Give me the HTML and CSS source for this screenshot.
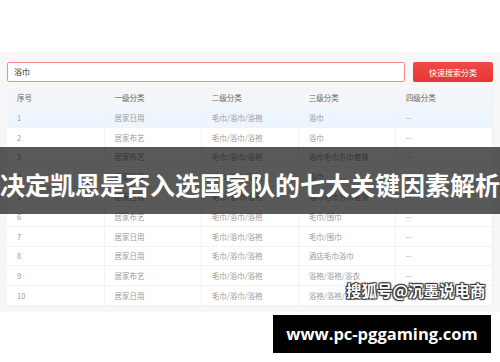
FILE: index.html
```html
<!DOCTYPE html>
<html>

<head>
  <title>分类搜索</title>
  <link rel="stylesheet" href="styles.css">
</head>

<body>
  <div class="page">
    <div class="panel">
      <div class="search-bar">
        <div class="search-input">浴巾</div>
        <button class="search-btn">快速搜索分类</button>
      </div>

      <table class="cat-table">
        <thead>
          <tr>
            <th>序号</th>
            <th>一级分类</th>
            <th>二级分类</th>
            <th>三级分类</th>
            <th>四级分类</th>
          </tr>
        </thead>
        <tbody>
          <tr class="hover"><td>1</td><td>居家日用</td><td>毛巾/浴巾/浴袍</td><td>浴巾</td><td>--</td></tr>
          <tr><td>2</td><td>居家布艺</td><td>毛巾/浴巾/浴袍</td><td>浴巾</td><td>--</td></tr>
          <tr><td>3</td><td>居家布艺</td><td>毛巾/浴巾/浴袍</td><td>浴巾毛巾方巾套装</td><td>--</td></tr>
          <tr><td>4</td><td>居家日用</td><td>毛巾/浴巾/浴袍</td><td>浴巾</td><td>--</td></tr>
          <tr><td>5</td><td>居家日用</td><td>毛巾/浴巾/浴袍</td><td>浴巾毛巾方巾套装</td><td>--</td></tr>
          <tr><td>6</td><td>居家布艺</td><td>毛巾/浴巾/浴袍</td><td>毛巾/围巾</td><td>--</td></tr>
          <tr><td>7</td><td>居家日用</td><td>毛巾/浴巾/浴袍</td><td>毛巾/围巾</td><td>--</td></tr>
          <tr><td>8</td><td>居家日用</td><td>毛巾/浴巾/浴袍</td><td>酒店毛巾浴巾</td><td>--</td></tr>
          <tr><td>9</td><td>居家布艺</td><td>毛巾/浴巾/浴袍</td><td>浴袍/浴袍/浴衣</td><td>--</td></tr>
          <tr><td>10</td><td>居家日用</td><td>毛巾/浴巾/浴袍</td><td>浴袍/浴袍/浴衣</td><td>--</td></tr>
        </tbody>
      </table>
    </div>

    <!-- overlays on top of the screenshot -->
    <div class="title-banner">决定凯恩是否入选国家队的七大关键因素解析</div>
    <div class="watermark">搜狐号@沉墨说电商</div>
    <div class="site-tag">www.pc-pggaming.com</div>
  </div>
</body>

</html>
```

FILE: styles.css
```css
body {
  margin: 0;
  background-color: #ffffff;
  font-family: "Noto Sans CJK SC", "Noto Sans", sans-serif;
}

.page {
  position: relative;
  width: 500px;
  height: 362px;
  padding-top: 52px;
  box-sizing: border-box;
  overflow: hidden;
}

/* --- Search panel --- */
.panel {
  background-color: #f7f7f7;
  padding: 10px 7px 6px;
}

.search-bar {
  display: flex;
  gap: 8px;
  height: 20px;
}

.search-input {
  flex: 1;
  background: #ffffff;
  border: 1px solid #f28b87;
  border-radius: 2px;
  font-size: 8px;
  line-height: 18px;
  color: #333;
  padding: 0 6px;
}

.search-btn {
  width: 80px;
  border: none;
  border-radius: 2px;
  background: linear-gradient(180deg, #f04a48, #e83535);
  color: #ffffff;
  font-family: inherit;
  font-size: 8px;
  padding: 0;
}

/* --- Table --- */
.cat-table {
  width: 486px;
  margin-top: 6px;
  border-collapse: collapse;
  table-layout: fixed;
  background: #ffffff;
  font-size: 7.5px;
}

.cat-table th,
.cat-table td {
  text-align: left;
  padding: 0 10px;
  border-right: 1px solid #f0f2f5;
  border-bottom: 1px solid #f0f2f5;
  white-space: nowrap;
  overflow: hidden;
}

.cat-table th {
  height: 19px;
  background: #f3f5f8;
  color: #666;
  font-weight: 400;
}

.cat-table td {
  height: 18.8px;
  color: #9a9a9a;
}

.cat-table tr.hover td {
  background: #edf5fe;
}

/* --- Overlays --- */
.title-banner {
  position: absolute;
  left: 0;
  top: 147px;
  width: 500px;
  height: 67px;
  padding-top: 24px;
  box-sizing: border-box;
  background: rgba(0, 0, 0, 0.65);
  color: #ffffff;
  font-size: 25px;
  font-weight: 700;
  line-height: 26px;
  text-align: center;
  white-space: nowrap;
}

.watermark {
  position: absolute;
  left: 346px;
  top: 280px;
  color: #ffffff;
  font-size: 15.5px;
  font-weight: 700;
  line-height: 20px;
  text-shadow: 0 0 1px #333, 1px 1px 1px #333, -1px -1px 1px #333, 1px -1px 1px #333, -1px 1px 1px #333;
}

.site-tag {
  position: absolute;
  left: 273px;
  top: 315px;
  width: 218px;
  height: 38px;
  background: #000000;
  color: #ffffff;
  font-family: "Open Sans", "DejaVu Sans", sans-serif;
  font-size: 16.5px;
  font-weight: 700;
  line-height: 38px;
  text-align: center;
}
```
